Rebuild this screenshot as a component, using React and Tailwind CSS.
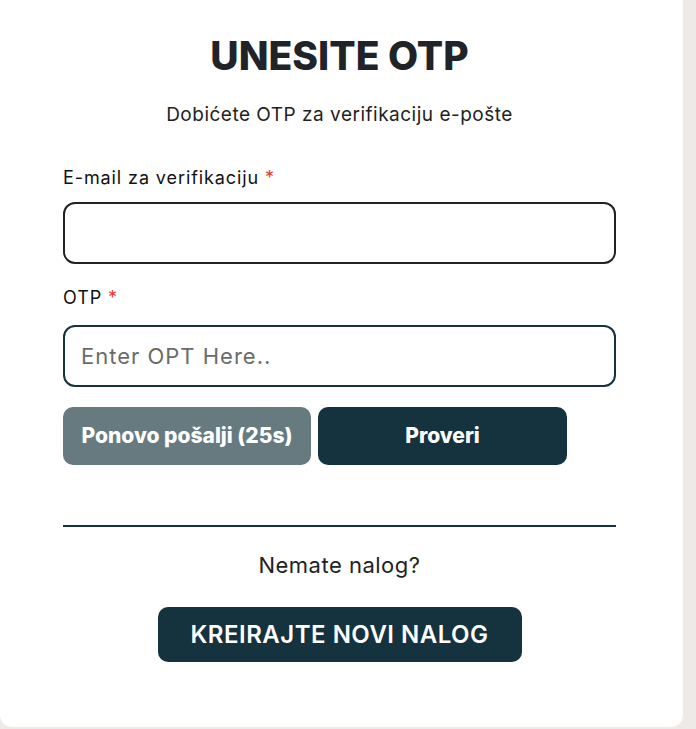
export default function App() {
    return (
        <div className="min-h-[729px] bg-[#eeeae7]" style={{ fontFamily: "Inter, 'Noto Sans', sans-serif" }}>
            {/* card */}
            <div className="w-[683px] bg-white rounded-b-xl pt-[32px] pb-[65px] pl-[63px] pr-[67px]">
                <h1 className="text-center text-[39px] font-extrabold text-[#202328] leading-[48px]">
                    UNESITE OTP
                </h1>
                <p className="mt-[23px] text-center text-[19px] tracking-[0.5px] text-[#222] leading-[24px]">
                    Dobićete OTP za verifikaciju e-pošte
                </p>

                {/* email */}
                <label className="mt-[39px] block text-[18px] tracking-[0.9px] text-[#111] leading-[24px]">
                    E-mail za verifikaciju <span className="text-[#e53935]">*</span>
                </label>
                <input
                    type="email"
                    className="mt-[12px] block w-full h-[62px] rounded-xl border-2 border-[#222] bg-white px-4 text-[20px] outline-none"
                />

                {/* otp */}
                <label className="mt-[22px] block text-[18px] tracking-[0.9px] text-[#111] leading-[24px]">
                    OTP <span className="text-[#e53935]">*</span>
                </label>
                <input
                    type="text"
                    placeholder="Enter OPT Here.."
                    className="mt-[15px] block w-full h-[62px] rounded-xl border-2 border-[#15323f] bg-white px-4 text-[22px] tracking-[1px] text-[#222] placeholder:text-[#6b6b6b] outline-none"
                />

                {/* buttons */}
                <div className="mt-[20px] flex gap-[7px]">
                    <button className="w-[248px] h-[58px] rounded-[10px] bg-[#667a80] text-white text-[21px] font-extrabold">
                        Ponovo pošalji (25s)
                    </button>
                    <button className="w-[249px] h-[58px] rounded-[10px] bg-[#15323f] text-white text-[21px] font-extrabold">
                        Proveri
                    </button>
                </div>

                <div className="mt-[60px] h-[2px] bg-[#15323f]" />

                <p className="mt-[24px] text-center text-[22px] tracking-[0.5px] text-[#222] leading-[28px]">Nemate nalog?</p>

                <div className="mt-[28px] flex justify-center">
                    <button className="w-[364px] h-[55px] rounded-[10px] bg-[#15323f] text-white text-[24px] font-semibold tracking-[0.5px]">
                        KREIRAJTE NOVI NALOG
                    </button>
                </div>
            </div>
        </div>
    );
}
